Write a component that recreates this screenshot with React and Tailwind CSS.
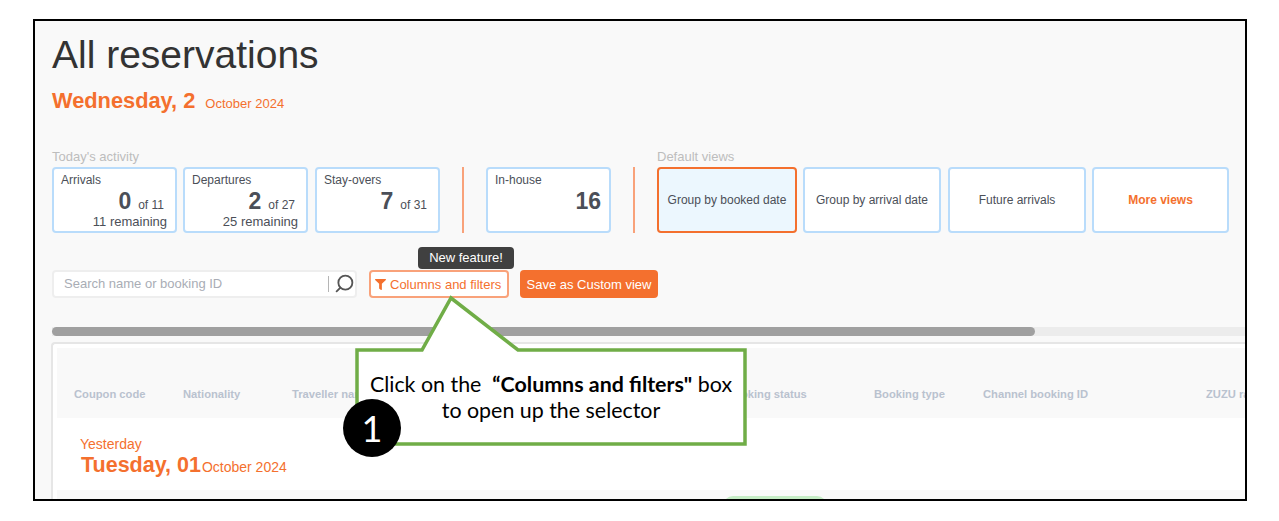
import { Search } from "lucide-react";
import { FaFilter } from "react-icons/fa";

const sans = "font-['Liberation_Sans',Arial,sans-serif]";

function StatCard({ label, value, of, remaining, className = "" }) {
  return (
    <div className={`w-[125px] h-[66px] rounded-[4px] border-2 border-[#b9dcfb] bg-white pl-[7px] pr-[8px] pt-[4px] text-[#4b4f58] leading-none ${className}`}>
      <div className="text-[12px] leading-[14px]">{label}</div>
      <div className={`flex items-baseline justify-end h-[27px] leading-[29px] ${of ? "pr-[3px]" : ""}`}>
        <span className="text-[23px] font-bold">{value}</span>
        {of && <span className="text-[12px] ml-[7px]">{of}</span>}
      </div>
      {remaining && <div className="text-right text-[13px] leading-[15px]">{remaining}</div>}
    </div>
  );
}

function ViewCard({ label, w, active, orange }) {
  return (
    <div
      className={`h-[66px] rounded-[4px] border-2 flex items-center justify-center text-[12px] ${w} ${
        active ? "border-[#f4702e] bg-[#ecf7fe]" : "border-[#b9dcfb] bg-white"
      } ${orange ? "text-[#f4702e] font-bold" : "text-[#4b4f58]"}`}
    >
      {label}
    </div>
  );
}

function Divider() {
  return <div className="w-[2px] h-[66px] bg-[#f9a27a] mx-[22px]" />;
}

function Callout() {
  return (
    <div className="absolute left-[340px] top-[290px] w-[420px] h-[170px]">
      <svg className="absolute inset-0" width="420" height="170" viewBox="0 0 420 170">
        <path
          d="M17 60 H82 L111 8 L178 60 H405 V154 H17 Z"
          fill="#ffffff"
          stroke="#70ad47"
          strokeWidth="3.5"
        />
      </svg>
      <div className="absolute left-[17px] top-[81px] w-[388px] text-center text-black text-[21.4px] leading-[26px] font-['Lato',sans-serif]">
        <div>
          Click on the&nbsp; <b>“Columns and filters"</b> box
        </div>
        <div>to open up the selector</div>
      </div>
      <div className="absolute left-[3px] top-[109px] w-[58px] h-[58px] rounded-full bg-black text-white flex items-center justify-center text-[36px] font-['Lato',sans-serif]">
        1
      </div>
    </div>
  );
}

export default function App() {
  return (
    <div className={`relative w-[1279px] h-[521px] bg-white pt-[19px] pl-[33px] overflow-hidden ${sans}`}>
      <div className="w-[1214px] h-[482px] border-2 border-black bg-[#f9f9f9] overflow-hidden">
        <div className="pl-[17px] pt-[11px]">
          <h1 className="text-[39px] leading-[46px] text-[#333333]">All reservations</h1>
          <div className="flex items-baseline mt-[9px] text-[#f4702e] leading-[28px]">
            <span className="text-[21.8px] font-bold">Wednesday, 2</span>
            <span className="text-[13px] ml-[10px]">October 2024</span>
          </div>
        </div>

        <div className="flex pl-[17px] mt-[31px]">
          <div>
            <div className="text-[13px] leading-[16px] text-[#bdbdbd] h-[18px]">Today's activity</div>
            <div className="flex gap-[6px]">
              <StatCard label="Arrivals" value="0" of="of 11" remaining="11 remaining" />
              <StatCard label="Departures" value="2" of="of 27" remaining="25 remaining" />
              <StatCard label="Stay-overs" value="7" of="of 31" className="ml-[1px]" />
            </div>
          </div>
          <div className="flex pt-[18px]">
            <Divider />
            <StatCard label="In-house" value="16" />
            <Divider />
          </div>
          <div>
            <div className="text-[13px] leading-[16px] text-[#bdbdbd] h-[18px]">Default views</div>
            <div className="flex gap-[6px]">
              <ViewCard label="Group by booked date" w="w-[140px]" active />
              <ViewCard label="Group by arrival date" w="w-[138px]" />
              <ViewCard label="Future arrivals" w="w-[138px] ml-[1px]" />
              <ViewCard label="More views" w="w-[137px]" orange />
            </div>
          </div>
        </div>

        <div className="flex items-center pl-[17px] mt-[37px] h-[28px]">
          <div className="w-[305px] h-[28px] rounded-[4px] border-2 border-[#eeeeee] bg-white flex items-center pl-[10px] text-[13px] text-[#a9adb5]">
            <span className="flex-1">Search name or booking ID</span>
            <span className="w-px h-[16px] bg-[#b5b5b5] mr-[5px]" />
            <Search size={21} strokeWidth={2.1} className="text-[#555555] -scale-x-100 -translate-y-[1px]" />
          </div>
          <div className="relative ml-[12px] w-[140px] h-[28px] rounded-[4px] border-2 border-[#f9a27a] bg-white flex items-center pl-[4px] pt-[1px] text-[13px] text-[#f4702e]">
            <FaFilter size={11} className="mr-[4px]" />
            Columns and filters
            <div className="absolute left-[47px] top-[-25px] w-[96px] h-[22px] rounded-[4px] bg-[#404040] text-white text-[13px] flex items-center justify-center">
              New feature!
            </div>
          </div>
          <div className="ml-[11px] w-[138px] h-[28px] rounded-[4px] bg-[#f4702e] text-white text-[13px] pt-[1px] flex items-center justify-center">
            Save as Custom view
          </div>
        </div>

        <div className="mt-[29px] ml-[17px] h-[9px] bg-[#ececec]">
          <div className="w-[983px] h-[9px] rounded-full bg-[#a0a0a0]" />
        </div>

        <div className="mt-[6px] ml-[16px] h-[200px] rounded-tl-[4px] border-l-2 border-t-2 border-[#e6e6e6] bg-white pl-[4px] pt-[4px]">
          <div className="flex items-end h-[70px] pb-[17px] pl-[17px] bg-[#f9f9f9] text-[11.2px] leading-[14px] font-bold text-[#b9c2cf] whitespace-nowrap overflow-hidden">
            <span className="w-[109px] shrink-0">Coupon code</span>
            <span className="w-[109px] shrink-0">Nationality</span>
            <span className="w-[434px] shrink-0">Traveller name</span>
            <span className="w-[148px] shrink-0">Booking status</span>
            <span className="w-[109px] shrink-0">Booking type</span>
            <span className="w-[223px] shrink-0">Channel booking ID</span>
            <span className="shrink-0">ZUZU rate</span>
          </div>
          <div className="h-[72px] pl-[23px] pt-[19px] text-[#f4702e]">
            <div className="text-[14px] leading-[15px]">Yesterday</div>
            <div className="flex items-baseline leading-[26px] ml-[1px]">
              <span className="text-[21.5px] font-bold">Tuesday, 01</span>
              <span className="text-[14px] ml-[1px]">October 2024</span>
            </div>
          </div>
          <div className="h-[40px] bg-[#f9f9f9] pl-[666px] pt-[6px]">
            <div className="w-[104px] h-[20px] rounded-full bg-[#c5ecc5]" />
          </div>
        </div>
      </div>
      <Callout />
    </div>
  );
}
